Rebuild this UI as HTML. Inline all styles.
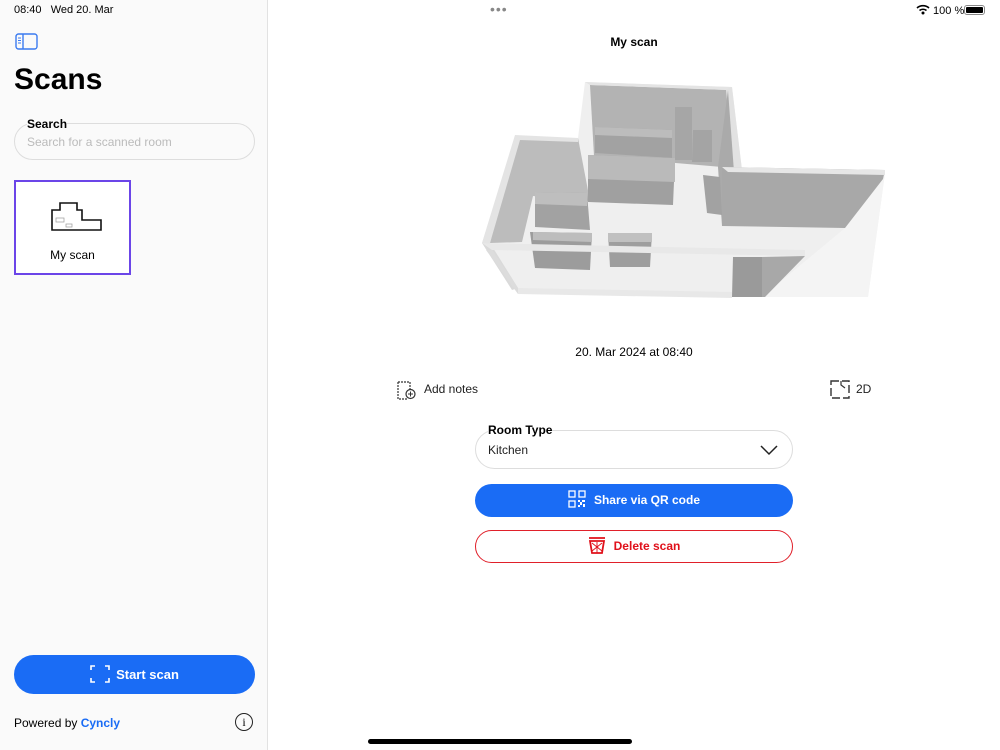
<!DOCTYPE html>
<html><head><meta charset="utf-8"><style>
*{margin:0;padding:0;box-sizing:border-box}
body{width:1000px;height:750px;background:#fff;font-family:"Liberation Sans",sans-serif;position:relative;overflow:hidden;color:#000}
.a{position:absolute}
</style></head><body>
<div class="a" style="left:0;top:0;width:268px;height:750px;background:#fafafa;border-right:1px solid #e2e2e2"></div>
<div class="a" style="left:14px;top:4px;font-size:11px">08:40 &nbsp; Wed 20. Mar</div>
<div class="a" style="left:490px;top:1px;font-size:14px;color:#888;letter-spacing:1px">•••</div>
<div class="a" style="left:916px;top:4px;font-size:11px">
<svg width="14" height="11" viewBox="0 0 14 11" style="vertical-align:-1px"><path d="M1 4a9 9 0 0 1 12 0M3.5 6.5a5.5 5.5 0 0 1 7 0" stroke="#000" stroke-width="1.6" fill="none"/><circle cx="7" cy="9" r="1.5"/></svg> 100 %</div>
<div class="a" style="left:964px;top:5px;width:21px;height:10px;border:1px solid #888;border-radius:3px;padding:1px"><div style="background:#000;width:100%;height:100%;border-radius:1px"></div></div>
<svg class="a" style="left:15px;top:33px" width="23" height="17"><rect x="1" y="1" width="21" height="15" rx="2.5" fill="none" stroke="#3b7bf0" stroke-width="1.4"/><line x1="8" y1="1" x2="8" y2="16" stroke="#3b7bf0" stroke-width="1.4"/><path d="M3 5h3M3 7.5h3M3 10h3" stroke="#3b7bf0"/></svg>
<div class="a" style="left:14px;top:63px;font-size:30px;font-weight:bold">Scans</div>
<div class="a" style="left:14px;top:123px;width:241px;height:37px;border:1px solid #ddd;border-radius:19px;background:#fafafa"></div>
<div class="a" style="left:27px;top:117px;font-size:12px;font-weight:bold;background:#fafafa">Search</div>
<div class="a" style="left:27px;top:135px;font-size:12px;color:#bbb">Search for a scanned room</div>
<div class="a" style="left:14px;top:180px;width:117px;height:95px;border:2px solid #6b45e8;background:#fff"></div>
<svg class="a" style="left:50px;top:200px" width="54" height="32"><path d="M10 3h17v7h5v10h19v10H2V10h8z" fill="none" stroke="#111" stroke-width="1.6"/><rect x="6" y="18" width="8" height="4" fill="none" stroke="#999" stroke-width=".7"/><rect x="16" y="24" width="6" height="3" fill="none" stroke="#999" stroke-width=".7"/></svg>
<div class="a" style="left:14px;top:248px;width:117px;text-align:center;font-size:12px">My scan</div>
<div class="a" style="left:14px;top:655px;width:241px;height:39px;background:#1a6cf5;border-radius:20px;color:#fff;font-size:13px;font-weight:bold;text-align:center;line-height:39px">
<svg width="20" height="18" style="vertical-align:-4px;margin-right:6px"><path d="M1 5V1h4M15 1h4v4M19 13v4h-4M5 17H1v-4" fill="none" stroke="#fff" stroke-width="1.6"/></svg>Start scan</div>
<div class="a" style="left:14px;top:716px;font-size:12px">Powered by <b style="color:#1a6cf5">Cyncly</b></div>
<div class="a" style="left:235px;top:713px;width:18px;height:18px;border:1.4px solid #222;border-radius:50%;text-align:center;font-size:12px;line-height:16px;font-family:'Liberation Serif',serif">i</div>
<div class="a" style="left:560px;top:35px;width:148px;text-align:center;font-size:12px;font-weight:bold">My scan</div>
<svg class="a" style="left:478px;top:76px" width="410" height="226">
<polygon points="37,62 100,62 107,6 254,11 264,94 407,97 390,221 40,214 4,167" fill="#efefef"/>
<polygon points="367,152 407,97 390,221 284,221" fill="#f4f4f4"/>
<polygon points="112,9 250,14 244,91 116,80" fill="#b3b3b3"/>
<polygon points="107,6 254,11 250,14 112,9" fill="#e4e4e4"/>
<polygon points="254,11 264,94 256,96 248,14" fill="#e2e2e2"/>
<polygon points="250,14 256,96 244,150 240,91" fill="#aaaaaa"/>
<polygon points="244,91 407,94 405,103 367,152 244,150" fill="#a8a8a8"/>
<polygon points="244,91 407,94 407,99 250,96" fill="#e6e6e6"/>
<polygon points="37,62 100,62 112,125 55,120 44,166 12,167" fill="#bcbcbc"/>
<polygon points="37,59 100,62 100,66 42,64 12,167 4,167" fill="#e4e4e4"/>
<polygon points="4,167 12,167 40,212 34,214" fill="#dadada"/>
<polygon points="117,51 194,54 194,82 117,77" fill="#a2a2a2"/>
<polygon points="117,51 194,54 194,62 117,59" fill="#bcbcbc"/>
<polygon points="197,31 214,31 214,84 197,84" fill="#a6a6a6"/>
<polygon points="215,54 234,54 234,86 214,86" fill="#a4a4a4"/>
<polygon points="110,79 197,82 195,129 110,126" fill="#a0a0a0"/>
<polygon points="110,79 197,82 197,106 110,103" fill="#bababa"/>
<polygon points="225,99 242,101 244,139 229,137" fill="#a2a2a2"/>
<polygon points="57,116 109,117 112,154 57,151" fill="#a2a2a2"/>
<polygon points="57,116 109,117 109,130 57,128" fill="#bebebe"/>
<polygon points="52,156 114,157 112,194 57,192" fill="#9c9c9c"/>
<polygon points="55,156 114,157 114,166 55,164" fill="#bdbdbd"/>
<polygon points="130,157 174,157 172,191 132,191" fill="#9e9e9e"/>
<polygon points="130,157 174,157 174,166 130,166" fill="#c0c0c0"/>
<polygon points="4,167 327,174 327,180 14,174" fill="#e8e8e8"/>
<polygon points="14,174 40,212 40,218 8,174" fill="#dcdcdc"/>
<polygon points="40,212 254,216 254,222 40,218" fill="#e8e8e8"/>
<polygon points="255,181 284,181 284,221 254,221" fill="#9a9a9a"/>
<polygon points="284,181 327,180 287,221 284,221" fill="#a8a8a8"/>
</svg>
<div class="a" style="left:560px;top:345px;width:148px;text-align:center;font-size:12px">20. Mar 2024 at 08:40</div>
<svg class="a" style="left:397px;top:380px" width="20" height="20"><path d="M1 2v17h9M1 2h12v8" fill="none" stroke="#333" stroke-width="1.2" stroke-dasharray="2 1"/><circle cx="13.5" cy="14" r="4.5" fill="#fff" stroke="#333" stroke-width="1.2"/><path d="M13.5 11.5v5M11 14h5" stroke="#333"/></svg>
<div class="a" style="left:424px;top:382px;font-size:12px;color:#222">Add notes</div>
<svg class="a" style="left:830px;top:380px" width="20" height="19"><path d="M1 1h18v17H1z" fill="none" stroke="#333" stroke-width="1.4" stroke-dasharray="8 3"/><path d="M11 1v4l4 3" fill="none" stroke="#333" stroke-width="1.2"/></svg>
<div class="a" style="left:856px;top:382px;font-size:12px;color:#222">2D</div>
<div class="a" style="left:475px;top:430px;width:318px;height:39px;border:1px solid #ddd;border-radius:20px"></div>
<div class="a" style="left:488px;top:423px;font-size:12px;font-weight:bold;background:#fff">Room Type</div>
<div class="a" style="left:488px;top:443px;font-size:12px;color:#222">Kitchen</div>
<svg class="a" style="left:760px;top:444px" width="18" height="12"><path d="M1 2l8 8 8-8" fill="none" stroke="#222" stroke-width="1.5"/></svg>
<div class="a" style="left:475px;top:484px;width:318px;height:33px;background:#1a6cf5;border-radius:17px;color:#fff;font-size:12px;font-weight:bold;text-align:center;line-height:33px">
<svg width="18" height="18" style="vertical-align:-4px;margin-right:8px"><g fill="none" stroke="#fff" stroke-width="1.3"><rect x="1" y="1" width="6" height="6"/><rect x="11" y="1" width="6" height="6"/><rect x="1" y="11" width="6" height="6"/></g><path d="M10 10h2v2h-2zM14 10h3v2h-3zM12 12h2v3h-2zM15 14h2v3h-2zM10 15h2v2h-2z" fill="#fff"/></svg>Share via QR code</div>
<div class="a" style="left:475px;top:530px;width:318px;height:33px;border:1px solid #e0202a;border-radius:17px;color:#e0101a;font-size:12px;font-weight:bold;text-align:center;line-height:31px">
<svg width="18" height="18" style="vertical-align:-4px;margin-right:8px"><path d="M1 2h16M2 5h14l-2 12H4z" fill="none" stroke="#e0101a" stroke-width="1.8"/><path d="M4 7l10 8M14 7L4 15M9 6v11" stroke="#e0101a" stroke-width=".9"/></svg>Delete scan</div>
<div class="a" style="left:368px;top:739px;width:264px;height:5px;background:#000;border-radius:3px"></div>
</body></html>
